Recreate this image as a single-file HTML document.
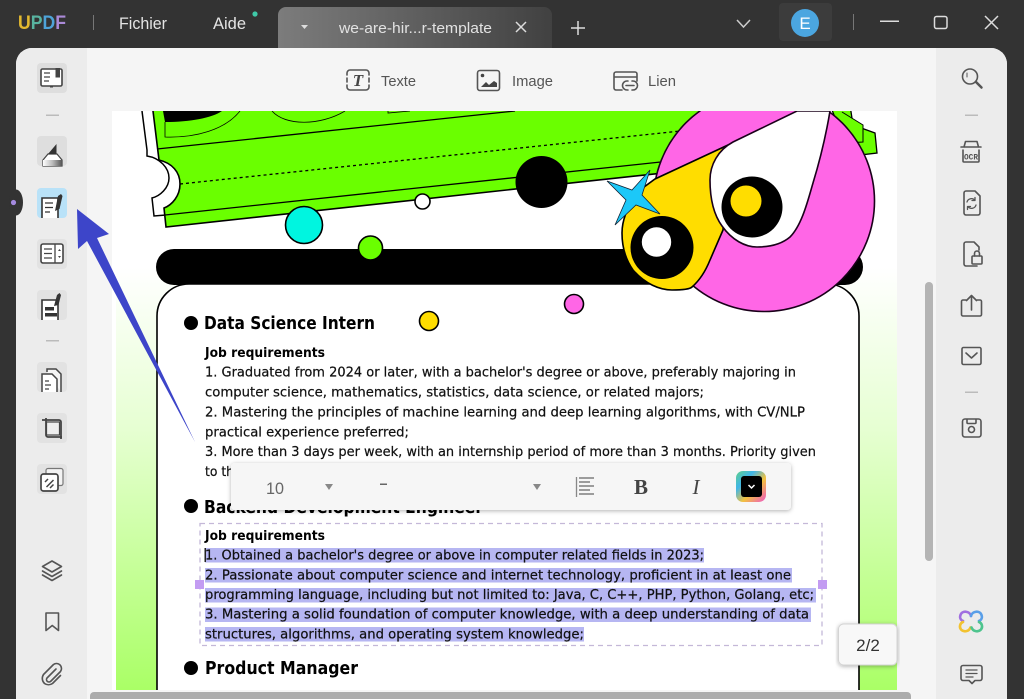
<!DOCTYPE html>
<html><head><meta charset="utf-8"><title>UPDF</title>
<style>
html,body{margin:0;padding:0;background:#333}
svg{display:block}
.s{font-family:"DejaVu Sans",sans-serif;fill:#111;font-size:13px;stroke:#111;stroke-width:.22px}
.h{font-family:"DejaVu Sans",sans-serif;fill:#000;font-weight:bold;font-size:17.5px}
.b{font-family:"DejaVu Sans",sans-serif;fill:#000;font-weight:bold;font-size:13px}
.u{font-family:"Liberation Sans",sans-serif}
.ic{fill:none;stroke:#555;stroke-width:1.6;stroke-linejoin:round;stroke-linecap:round}
</style></head>
<body>
<svg xmlns="http://www.w3.org/2000/svg" width="1024" height="699" viewBox="0 0 1024 699">
<defs>
<linearGradient id="tab" x1="0" x2="1" y1="0" y2="0"><stop offset="0" stop-color="#7c7c7c"/><stop offset=".55" stop-color="#5c5c5c"/><stop offset="1" stop-color="#414141"/></linearGradient>
<linearGradient id="pg" x1="0" x2="0" y1="0" y2="1"><stop offset="0" stop-color="#ffffff"/><stop offset=".27" stop-color="#ffffff"/><stop offset=".55" stop-color="#e6ffd2"/><stop offset="1" stop-color="#aaff66"/></linearGradient>
<linearGradient id="cb" x1="0" x2="1" y1="0" y2="1"><stop offset="0" stop-color="#5fd08a"/><stop offset=".3" stop-color="#3fb5e8"/><stop offset=".6" stop-color="#f2c23e"/><stop offset="1" stop-color="#f055c8"/></linearGradient>
<linearGradient id="hl" x1="0" x2="1" y1="0" y2="0"><stop offset="0" stop-color="#fff"/><stop offset=".5" stop-color="#bbb"/><stop offset="1" stop-color="#555"/></linearGradient>
<clipPath id="pc"><rect x="112" y="111" width="785" height="579"/></clipPath>
<filter id="sh" x="-5%" y="-20%" width="110%" height="140%"><feDropShadow dx="0" dy="1" stdDeviation="2" flood-color="#000" flood-opacity=".3"/></filter>
</defs>

<rect width="1024" height="699" fill="#333"/>

<!-- Title bar -->
<text x="18" y="29" class="u" font-size="19" font-weight="bold" textLength="48" lengthAdjust="spacingAndGlyphs"><tspan fill="#e3b92f">U</tspan><tspan fill="#58b3a0">P</tspan><tspan fill="#4ea3d8">D</tspan><tspan fill="#ab8ad8">F</tspan></text>
<rect x="93" y="15" width="1" height="15" fill="#777"/>
<text x="119" y="29" class="u" font-size="17" fill="#e4e4e4" textLength="48" lengthAdjust="spacingAndGlyphs">Fichier</text>
<text x="213" y="29" class="u" font-size="17" fill="#e4e4e4" textLength="33" lengthAdjust="spacingAndGlyphs">Aide</text>
<circle cx="255" cy="14" r="2.6" fill="#3fc9a8"/>
<path d="M278 48V15a8 8 0 0 1 8-8H544a8 8 0 0 1 8 8V48Z" fill="url(#tab)"/>
<path d="M301 25h7l-3.500 4Z" fill="#ddd"/>
<text x="339" y="33" class="u" font-size="15" fill="#e2e2e2" textLength="153" lengthAdjust="spacingAndGlyphs">we-are-hir...r-template</text>
<path d="M516 22l10 10M526 22l-10 10" stroke="#ddd" stroke-width="1.5" fill="none"/>
<path d="M578 21v14M571 28h14" stroke="#ddd" stroke-width="1.500" fill="none"/>
<path d="M737 20l6.500 7 6.500-7" stroke="#ccc" stroke-width="1.500" fill="none"/>
<rect x="779" y="3" width="53" height="38" rx="4" fill="#3c3c3c"/>
<circle cx="805" cy="23" r="14" fill="#4ba6e0"/>
<text x="805" y="29" class="u" font-size="17" fill="#fff" text-anchor="middle">E</text>
<rect x="853" y="14" width="1" height="16" fill="#777"/>
<rect x="880" y="20.500" width="19" height="1.500" fill="#ddd"/>
<rect x="934.500" y="16.500" width="12.500" height="12" rx="2" fill="none" stroke="#ddd" stroke-width="1.500"/>
<path d="M985 16l13 13M998 16l-13 13" stroke="#ddd" stroke-width="1.500" fill="none"/>

<!-- Main panel -->
<path d="M16 699V64a16 16 0 0 1 16-16H991a16 16 0 0 1 16 16V699Z" fill="#f5f5f5"/>
<path d="M87 48H32a16 16 0 0 0-16 16V699H87Z" fill="#ececec"/>
<path d="M936 48H991a16 16 0 0 1 16 16V699H936Z" fill="#ececec"/>
<ellipse cx="16" cy="202.500" rx="7" ry="13" fill="#333"/>
<circle cx="13.500" cy="202.500" r="2.600" fill="#a58ae0"/>

<!-- Page -->
<rect x="112" y="111" width="785" height="579" fill="#fff"/>
<rect x="116" y="111" width="781" height="579" fill="url(#pg)"/>
<g clip-path="url(#pc)">
  <!-- ticket -->
  <path d="M142 111L147 150V156C160 158 169 168 169 178C169 188 160 196 152 198L154 216L166 215" fill="#fff" stroke="#000" stroke-width="1.500"/>
  <path d="M153 111L159 160C172 163 180 172 180 184C180 196 172 205 164 208L166 227L700 169V100H153Z" fill="#6aff00" stroke="#000" stroke-width="1.600"/>
  <path d="M163 111H222C212 118 190 122 165 122Z" fill="#000"/>
  <path d="M165 122V137C195 138 225 130 240 111" fill="none" stroke="#000" stroke-width=".8"/>
  <path d="M272 111C285 126 320 126 345 111" fill="none" stroke="#000" stroke-width=".8"/>
  <path d="M388 111V113L410 111" fill="none" stroke="#000" stroke-width=".8"/>
  <path d="M157 149L515 111" stroke="#000" stroke-width="1.300" fill="none"/>
  <path d="M180 184L690 130" stroke="#000" stroke-width="1.300" stroke-dasharray="3 3" fill="none"/>
  <path d="M165 215L670 161" stroke="#000" stroke-width="1.300" fill="none"/>
  <polygon points="830,105 850,105 853,125 875,133 877,153 860,155 840,130" fill="#6aff00" stroke="#000" stroke-width="1.300"/>
  <path d="M842 112L863 125V142L845 143" fill="#6aff00" stroke="#000" stroke-width="1"/>
  <circle cx="541.500" cy="182" r="26" fill="#000"/>
  <circle cx="422.500" cy="201.500" r="7.500" fill="#fff" stroke="#000" stroke-width="1.600"/>
  <circle cx="304" cy="225" r="18.500" fill="#00f5e0" stroke="#000" stroke-width="1.600"/>
  <!-- pill and card -->
  <rect x="156" y="249" width="707" height="36" rx="18" fill="#000"/>
  <circle cx="370.500" cy="248" r="12" fill="#6aff00" stroke="#000" stroke-width="1.600"/>
  <path d="M157 705V316a32 32 0 0 1 32-32H827a32 32 0 0 1 32 32V705Z" fill="#fff" stroke="#000" stroke-width="1.600"/>
  <!-- big art -->
  <circle cx="764" cy="201" r="110.500" fill="#ff66e6" stroke="#1a001a" stroke-width="1.600"/>
  <path d="M728 145L655 179L640 190C628 205 622 220 622 233C622 248 626 260 633 270C645 284 660 290 672 290C682 290 690 289 692 287C700 280 706 270 710 260L723 230Z" fill="#ffdd00" stroke="#000" stroke-width="1.600"/>
  <path d="M797 111L733 142C718 150 710 165 710 180C710 200 714 215 722 226C732 240 745 247 757 247C772 247 783 243 790 237C802 225 808 200 813 183C820 160 826 135 830 111Z" fill="#fff" stroke="#1a001a" stroke-width="1.600"/>
  <circle cx="752" cy="207" r="30.500" fill="#000"/>
  <circle cx="746" cy="201" r="15.500" fill="#ffdd00"/>
  <circle cx="662" cy="247.500" r="31.500" fill="#000"/>
  <circle cx="656.500" cy="242" r="14.700" fill="#fff"/>
  <path d="M607 181L632 190L650 170L642 195L660 214L636 205L615 225L626 200Z" fill="#1cc8f8" stroke="#123" stroke-width=".8"/>
  <circle cx="574" cy="304" r="9.500" fill="#ff66e6" stroke="#000" stroke-width="1.600"/>
  <circle cx="429" cy="321" r="9.500" fill="#ffdd00" stroke="#000" stroke-width="1.600"/>
</g>

<!-- Doc text -->
<circle cx="191" cy="323" r="7" fill="#000"/>
<text x="204" y="329" class="h" textLength="171" lengthAdjust="spacingAndGlyphs">Data Science Intern</text>
<text x="205" y="357" class="b" textLength="120" lengthAdjust="spacingAndGlyphs">Job requirements</text>
<text x="205" y="376.500" class="s" textLength="591" lengthAdjust="spacingAndGlyphs">1. Graduated from 2024 or later, with a bachelor's degree or above, preferably majoring in</text>
<text x="205" y="396.500" class="s" textLength="499" lengthAdjust="spacingAndGlyphs">computer science, mathematics, statistics, data science, or related majors;</text>
<text x="205" y="416.500" class="s" textLength="600" lengthAdjust="spacingAndGlyphs">2. Mastering the principles of machine learning and deep learning algorithms, with CV/NLP</text>
<text x="205" y="436.500" class="s" textLength="204" lengthAdjust="spacingAndGlyphs">practical experience preferred;</text>
<text x="205" y="456" class="s" textLength="611" lengthAdjust="spacingAndGlyphs">3. More than 3 days per week, with an internship period of more than 3 months. Priority given</text>
<text x="205" y="476" class="s" textLength="29" lengthAdjust="spacingAndGlyphs">to th</text>
<circle cx="191" cy="506" r="7" fill="#000"/>
<text x="204" y="513" class="h" textLength="279" lengthAdjust="spacingAndGlyphs">Backend Development Engineer</text>

<!-- Selection -->
<rect x="200" y="523.500" width="622" height="122" fill="#fff" stroke="#c4b8d8" stroke-width="1.300" stroke-dasharray="5 4"/>
<text x="205" y="540" class="b" textLength="120" lengthAdjust="spacingAndGlyphs">Job requirements</text>
<g fill="#b6b6f2">
<rect x="205" y="548" width="499" height="14.500"/>
<rect x="205" y="568" width="587" height="14.500"/>
<rect x="205" y="588" width="611" height="14.500"/>
<rect x="205" y="607.500" width="606" height="14.500"/>
<rect x="205" y="627" width="379" height="14.500"/>
</g>
<rect x="204.500" y="548" width="1.500" height="14" fill="#222"/>
<text x="205" y="559.500" class="s" textLength="499" lengthAdjust="spacingAndGlyphs">1. Obtained a bachelor's degree or above in computer related fields in 2023;</text>
<text x="205" y="579.500" class="s" textLength="586" lengthAdjust="spacingAndGlyphs">2. Passionate about computer science and internet technology, proficient in at least one</text>
<text x="205" y="599" class="s" textLength="609" lengthAdjust="spacingAndGlyphs">programming language, including but not limited to: Java, C, C++, PHP, Python, Golang, etc;</text>
<text x="205" y="618.500" class="s" textLength="604" lengthAdjust="spacingAndGlyphs">3. Mastering a solid foundation of computer knowledge, with a deep understanding of data</text>
<text x="205" y="638.500" class="s" textLength="379" lengthAdjust="spacingAndGlyphs">structures, algorithms, and operating system knowledge;</text>
<rect x="195" y="580" width="9" height="9" fill="#c39cf2"/>
<rect x="818" y="580" width="9" height="9" fill="#c39cf2"/>
<circle cx="191" cy="668" r="7" fill="#000"/>
<text x="205" y="674" class="h" textLength="153" lengthAdjust="spacingAndGlyphs">Product Manager</text>

<!-- Arrow -->
<path d="M77 209L109 234L97 238L195 442L87 241L78 249Z" fill="#3d45c9"/>

<!-- Floating toolbar -->
<rect x="231" y="463" width="560" height="47" rx="4" fill="#f6f6f6" filter="url(#sh)"/>
<text x="266" y="494" class="u" font-size="17" fill="#666" textLength="18" lengthAdjust="spacingAndGlyphs">10</text>
<path d="M325 484h8l-4 6Z" fill="#888"/>
<rect x="380" y="483.500" width="7" height="1.500" fill="#666"/>
<path d="M533 484h8l-4 6Z" fill="#888"/>
<path d="M576.500 477v20" stroke="#888" stroke-width="1.300"/>
<path d="M579 478h15M579 482h11M579 486h15M579 490h11M579 494h15" stroke="#666" stroke-width="1.200"/>
<text x="641" y="494" font-family="Liberation Serif,serif" font-size="21" font-weight="bold" fill="#444" text-anchor="middle">B</text>
<text x="696" y="494" font-family="Liberation Serif,serif" font-size="21" font-style="italic" fill="#444" text-anchor="middle">I</text>
<rect x="736" y="471" width="30" height="31" rx="7" fill="url(#cb)"/>
<rect x="741" y="476" width="21" height="21" rx="3" fill="#000"/>
<path d="M748.500 485l3 3 3-3" stroke="#fff" stroke-width="1.500" fill="none"/>

<!-- Scrollbars, page count -->
<rect x="925" y="282" width="8" height="279" rx="4" fill="#b4b4b4"/>
<path d="M90 699V696a4 4 0 0 1 4-4H907a4 4 0 0 1 4 4V699Z" fill="#acacac"/>
<rect x="838.500" y="624" width="58.500" height="41" rx="5" fill="#f8f8f8" stroke="#d4d4d4" filter="url(#sh)"/>
<text x="868" y="651" class="u" font-size="17" fill="#333" text-anchor="middle">2/2</text>

<!-- Top toolbar -->
<g class="ic">
<path d="M350 70h16a3 3 0 0 1 3 3v2M369 85v2a3 3 0 0 1-3 3h-16a3 3 0 0 1-3-3v-2M347 75v-2a3 3 0 0 1 3-3M347 78v4M369 78v4"/>
<rect x="477.500" y="70.500" width="22" height="20" rx="2.500"/>
<path d="M637 81v-7a2 2 0 0 0-2-2h-19a2 2 0 0 0-2 2v14a2 2 0 0 0 2 2h6M614 77h23"/>
<path d="M628 81h-1a4.500 4.500 0 0 0 0 9h1M632 81h1a4.500 4.500 0 0 1 0 9h-1M626 85.500h8"/>
</g>
<text x="358" y="86" font-family="Liberation Serif,serif" font-style="italic" font-weight="bold" font-size="17" fill="#444" text-anchor="middle">T</text>
<circle cx="482.500" cy="75.500" r="1.800" fill="#444"/>
<path d="M481 87l5-5 3 3 5-4 3 2v4Z" fill="#444"/>
<text x="381" y="86" class="u" font-size="15" fill="#555" textLength="35" lengthAdjust="spacingAndGlyphs">Texte</text>
<text x="512" y="86" class="u" font-size="15" fill="#555" textLength="41" lengthAdjust="spacingAndGlyphs">Image</text>
<text x="648" y="86" class="u" font-size="15" fill="#555" textLength="28" lengthAdjust="spacingAndGlyphs">Lien</text>

<!-- Left tiles -->
<g fill="#dedede">
<rect x="37" y="63" width="30" height="30" rx="4"/>
<rect x="37" y="136" width="30" height="30" rx="4"/>
<rect x="37" y="188" width="30" height="30" rx="4" fill="#b9e2f8"/>
<rect x="37" y="239" width="30" height="30" rx="4" fill="#e2e2e2"/>
<rect x="37" y="290" width="30" height="30" rx="4" fill="#e2e2e2"/>
<rect x="37" y="362" width="30" height="30" rx="4" fill="#e2e2e2"/>
<rect x="37" y="413" width="30" height="30" rx="4" fill="#e2e2e2"/>
<rect x="37" y="464" width="30" height="30" rx="4" fill="#e2e2e2"/>
</g>
<rect x="46" y="114.500" width="13" height="1.500" fill="#bbb"/>
<rect x="46" y="340" width="13" height="1.500" fill="#bbb"/>
<!-- book -->
<rect x="41" y="69" width="21" height="17" rx="1.500" fill="#fff" stroke="#444" stroke-width="1.600"/>
<path d="M44 73h6M44 77h6M44 81h5" stroke="#444" stroke-width="1.200" fill="none"/>
<path d="M50 86.500h3" stroke="#444" stroke-width="2"/>
<path d="M55.500 68h4.500v9.500h-4.500Z" fill="#444"/>
<!-- highlighter -->
<path d="M43 166v-6l5-6h9l5 6v6Z" fill="#fff" stroke="#444" stroke-width="1.200"/>
<path d="M48 154l8.500-10v10Z" fill="#333"/>
<rect x="43" y="160" width="19" height="6" fill="url(#hl)"/>
<!-- edit -->
<path d="M42 218V198h16v20" fill="#fff" stroke="#333" stroke-width="1.600"/>
<path d="M45 203h8M45 207.500h8M45 212h5" stroke="#333" stroke-width="1.300" fill="none"/>
<path d="M55 211l3-15 3-2 1.500 2-3 13Z" fill="#333"/>
<!-- columns -->
<rect x="41" y="244" width="22" height="19" rx="2" fill="#fff" stroke="#444" stroke-width="1.600"/>
<path d="M55 244v19M44 249h8M44 253.500h8M44 258h8" stroke="#444" stroke-width="1.300" fill="none"/>
<path d="M58 251l1.500-2 1.500 2ZM58 256h3l-1.500 2Z" fill="#444"/>
<!-- form edit -->
<path d="M42 320V300h16v20" fill="#fff" stroke="#333" stroke-width="1.600"/>
<rect x="45" y="307" width="9" height="3.500" fill="#333"/>
<rect x="45" y="313" width="12" height="3.500" fill="#333"/>
<path d="M54 306l3-11 2.500-2 1.500 2-2.500 10Z" fill="#333"/>
<!-- pages -->
<path d="M47 372v-3h9l5 5v18" fill="#f4f4f4" stroke="#444" stroke-width="1.500"/>
<path d="M42 392V374h10l5 5v13" fill="#fff" stroke="#444" stroke-width="1.500"/>
<path d="M45 381h4M45 385h6M45 389h4" stroke="#444" stroke-width="1.300" fill="none"/>
<!-- crop -->
<path d="M46 418v17a2 2 0 0 0 2 2h14M42 420h17a2 2 0 0 1 2 2v17" fill="none" stroke="#444" stroke-width="1.800"/>
<rect x="46.500" y="422" width="13" height="13" fill="#eee" stroke="#444" stroke-width="1.200"/>
<!-- combine -->
<rect x="46" y="468.500" width="17" height="17" rx="2" fill="#f3f3f3" stroke="#777" stroke-width="1.200"/>
<rect x="41" y="474" width="17" height="17" rx="2.500" fill="#fff" stroke="#444" stroke-width="1.700"/>
<path d="M45 482l3-3M46.500 487l7-7M50 488l3.500-3.500" stroke="#444" stroke-width="1.500" fill="none"/>
<!-- layers / bookmark / clip -->
<g class="ic">
<path d="M52 561l9.500 5.500-9.500 5.500-9.500-5.500Z"/>
<path d="M42.500 571l9.500 5.500 9.500-5.500M42.500 575l9.500 5.500 9.500-5.500"/>
<path d="M46 613h12.500v17.500l-6.250-5-6.250 5Z"/>
<path d="M56 669l-9 9a2.500 2.500 0 0 0 3.500 3.500l10-10a5 5 0 0 0-7-7l-10 10a7 7 0 0 0 1 9 7 7 0 0 0 8 0l8-8"/>
</g>

<!-- Right icons -->
<g class="ic">
<circle cx="970" cy="76.500" r="7.500"/>
<path d="M967 73v4" stroke-width="1"/>
<path d="M976 82l5.500 5.500" stroke-width="2.500"/>
<path d="M961 147h20M964 147l1.500-5.500h11.500l1.500 5.500M963 150v11a1 1 0 0 0 1 1h14a1 1 0 0 0 1-1v-11"/>
<path d="M966 191h9l5 5v17a2 2 0 0 1-2 2h-12a2 2 0 0 1-2-2v-20a2 2 0 0 1 2-2Z"/>
<path d="M967 202a4.500 4.500 0 0 1 8-1.500M976 205a4.500 4.500 0 0 1-8 1.500M975 197.500v3h-3M967.500 209.500v-3h3" stroke-width="1.300"/>
<path d="M977 266h-11a2 2 0 0 1-2-2v-20a2 2 0 0 1 2-2h8l5 5v3"/>
<rect x="972" y="256" width="10" height="8" rx="1"/>
<path d="M974.500 256v-2.500a2.500 2.500 0 0 1 5 0V256"/>
<path d="M966 300h-3a1.500 1.500 0 0 0-1.500 1.500v13a1.500 1.500 0 0 0 1.500 1.500h17a1.500 1.500 0 0 0 1.500-1.500v-13a1.500 1.500 0 0 0-1.500-1.500h-3"/>
<path d="M971.500 310V296M966.500 300.500l5-5 5 5"/>
<rect x="962" y="347.500" width="19" height="17" rx="1.500"/>
<path d="M966 353l5.500 5 5.500-5"/>
<rect x="962.500" y="419" width="18.500" height="18" rx="2.500"/>
<path d="M967 419.500v3a1 1 0 0 0 1 1h7a1 1 0 0 0 1-1v-3"/>
<circle cx="971.500" cy="429.500" r="3"/>
<path d="M963 665.500h17a2 2 0 0 1 2 2v11a2 2 0 0 1-2 2h-5l-3 3-3-3h-6a2 2 0 0 1-2-2v-11a2 2 0 0 1 2-2Z"/>
<path d="M966 670h11M966 673.500h11M966 677h7" stroke-width="1.300"/>
</g>
<text x="971" y="159.500" font-family="Liberation Mono,monospace" font-weight="bold" font-size="8" fill="#555" text-anchor="middle" textLength="14" lengthAdjust="spacingAndGlyphs">OCR</text>
<rect x="965" y="114.500" width="13" height="1.500" fill="#bbb"/>
<rect x="965" y="391.500" width="13" height="1.500" fill="#bbb"/>
<!-- AI logo -->
<g fill="none" stroke-width="2.600" stroke-linecap="round">
<path d="M971 616c-1-5-9-6-10.500-1-1 2.500 0 5 2.500 6" stroke="#a06ee0"/>
<path d="M971 616c1-5 9-6 10.500-1 1 2.500 0 5-2.500 6" stroke="#5a9fe8"/>
<path d="M963 622c-3 1-4 5-2 7.500 3 3 8 2 9.500-2" stroke="#f2c230"/>
<path d="M979 622c3 1 4 5 2 7.500-3 3-8 2-9.500-2" stroke="#4ec48e"/>
</g>
</svg>
</body></html>
